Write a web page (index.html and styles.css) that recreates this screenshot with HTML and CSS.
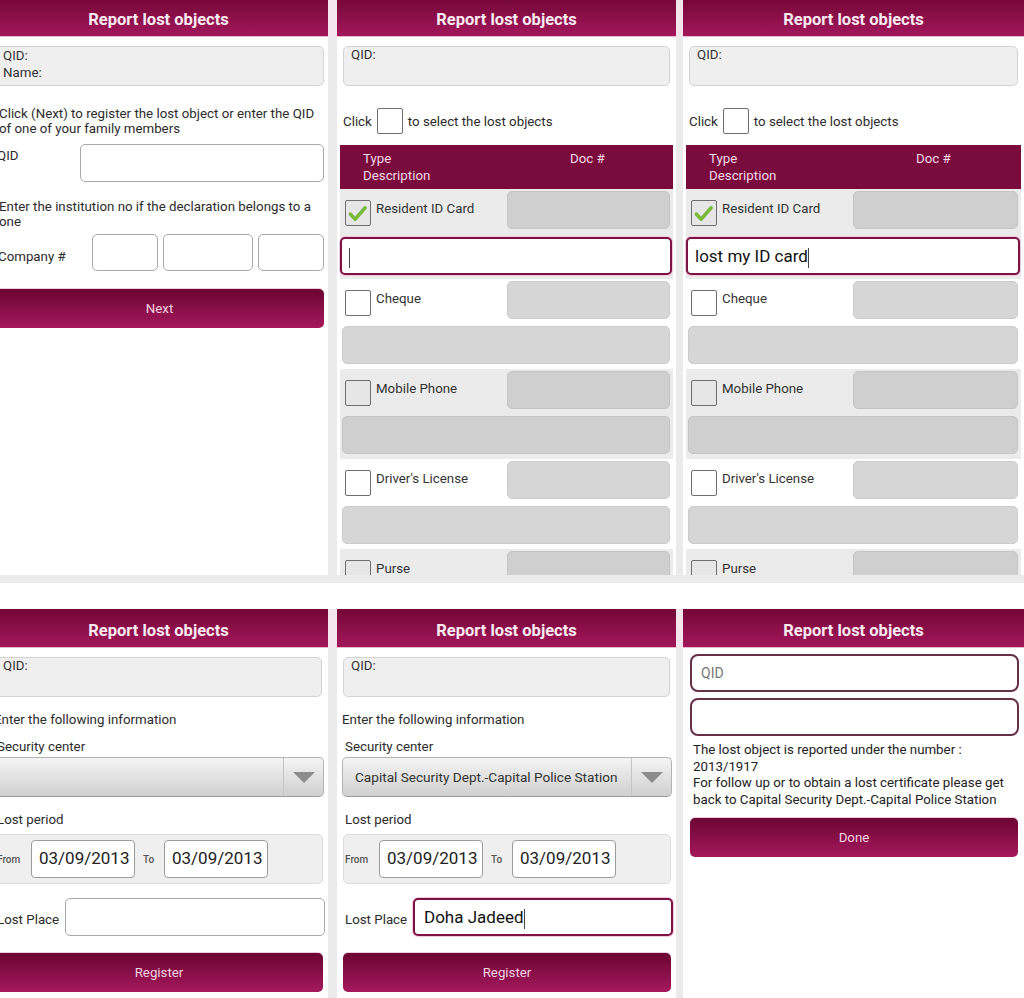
FILE: index.html
```html
<!DOCTYPE html>
<html>
<head>
    <title>Report lost objects</title>
    <link rel="stylesheet" href="styles.css">
</head>
<body>
    <div class="row row-top">
        <!-- step 1: QID / company -->
        <div class="clip">
            <div class="screen">
                <div class="title">Report lost objects</div>
                <div class="info two-line">QID:<br>Name:</div>
                <p class="note">Click (Next) to register the lost object or enter the QID of one of your family members</p>
                <div class="qid-row">
                    <span class="field-label">QID</span>
                    <div class="input"></div>
                </div>
                <p class="note note-2">Enter the institution no if the declaration belongs to a one</p>
                <div class="company-row">
                    <span class="company-label">Company #</span>
                    <div class="input small"></div>
                    <div class="input mid"></div>
                    <div class="input small"></div>
                </div>
                <div class="btn btn-next">Next</div>
            </div>
        </div>

        <!-- step 2: select objects -->
        <div class="screen">
            <div class="title">Report lost objects</div>
            <div class="info">QID:</div>
            <div class="pick">Click <span class="box"></span> to select the lost objects</div>
            <div class="table-head">
                <div class="col-type">Type<br>Description</div>
                <div>Doc #</div>
            </div>
            <div class="obj-row shaded">
                <div class="obj-top">
                    <div class="obj-check">
                        <span class="box"><svg viewBox="0 0 24 24" width="23" height="23"><path d="M4.5 12.5 L9.5 18 L20 6" fill="none" stroke="#78bb3c" stroke-width="3.6" stroke-linecap="round" stroke-linejoin="round"/></svg></span>
                        <span class="obj-name">Resident ID Card</span>
                    </div>
                    <div class="doc"></div>
                </div>
                <div class="desc focus"><span class="caret"></span></div>
            </div>
            <div class="obj-row">
                <div class="obj-top">
                    <div class="obj-check"><span class="box"></span><span class="obj-name">Cheque</span></div>
                    <div class="doc"></div>
                </div>
                <div class="desc"></div>
            </div>
            <div class="obj-row shaded">
                <div class="obj-top">
                    <div class="obj-check"><span class="box"></span><span class="obj-name">Mobile Phone</span></div>
                    <div class="doc"></div>
                </div>
                <div class="desc"></div>
            </div>
            <div class="obj-row">
                <div class="obj-top">
                    <div class="obj-check"><span class="box"></span><span class="obj-name">Driver's License</span></div>
                    <div class="doc"></div>
                </div>
                <div class="desc"></div>
            </div>
            <div class="obj-row shaded">
                <div class="obj-top">
                    <div class="obj-check"><span class="box"></span><span class="obj-name">Purse</span></div>
                    <div class="doc"></div>
                </div>
                <div class="desc"></div>
            </div>
        </div>

        <!-- step 2 with description typed -->
        <div class="screen">
            <div class="title">Report lost objects</div>
            <div class="info">QID:</div>
            <div class="pick">Click <span class="box"></span> to select the lost objects</div>
            <div class="table-head">
                <div class="col-type">Type<br>Description</div>
                <div>Doc #</div>
            </div>
            <div class="obj-row shaded">
                <div class="obj-top">
                    <div class="obj-check">
                        <span class="box"><svg viewBox="0 0 24 24" width="23" height="23"><path d="M4.5 12.5 L9.5 18 L20 6" fill="none" stroke="#78bb3c" stroke-width="3.6" stroke-linecap="round" stroke-linejoin="round"/></svg></span>
                        <span class="obj-name">Resident ID Card</span>
                    </div>
                    <div class="doc"></div>
                </div>
                <div class="desc focus">lost my ID card<span class="caret"></span></div>
            </div>
            <div class="obj-row">
                <div class="obj-top">
                    <div class="obj-check"><span class="box"></span><span class="obj-name">Cheque</span></div>
                    <div class="doc"></div>
                </div>
                <div class="desc"></div>
            </div>
            <div class="obj-row shaded">
                <div class="obj-top">
                    <div class="obj-check"><span class="box"></span><span class="obj-name">Mobile Phone</span></div>
                    <div class="doc"></div>
                </div>
                <div class="desc"></div>
            </div>
            <div class="obj-row">
                <div class="obj-top">
                    <div class="obj-check"><span class="box"></span><span class="obj-name">Driver's License</span></div>
                    <div class="doc"></div>
                </div>
                <div class="desc"></div>
            </div>
            <div class="obj-row shaded">
                <div class="obj-top">
                    <div class="obj-check"><span class="box"></span><span class="obj-name">Purse</span></div>
                    <div class="doc"></div>
                </div>
                <div class="desc"></div>
            </div>
        </div>
    </div>

    <div class="row row-bottom">
        <!-- step 3: empty -->
        <div class="clip">
            <div class="screen">
                <div class="title">Report lost objects</div>
                <div class="info">QID:</div>
                <div class="lead">Enter the following information</div>
                <div class="label label-first">Security center</div>
                <div class="select">
                    <span class="select-text"></span>
                    <span class="select-arrow"><svg viewBox="0 0 22 11" width="22" height="11"><path d="M0 0 H22 L11 11 Z" fill="#8d8d8d"/></svg></span>
                </div>
                <div class="label">Lost period</div>
                <div class="dates">
                    <span class="from">From</span>
                    <div class="date">03/09/2013</div>
                    <span class="to">To</span>
                    <div class="date">03/09/2013</div>
                </div>
                <div class="place">
                    <span class="place-label">Lost Place</span>
                    <div class="input place-input"></div>
                </div>
                <div class="btn btn-register">Register</div>
            </div>
        </div>

        <!-- step 3: filled -->
        <div class="screen">
            <div class="title">Report lost objects</div>
            <div class="info">QID:</div>
            <div class="lead">Enter the following information</div>
            <div class="label label-first">Security center</div>
            <div class="select">
                <span class="select-text">Capital Security Dept.-Capital Police Station</span>
                <span class="select-arrow"><svg viewBox="0 0 22 11" width="22" height="11"><path d="M0 0 H22 L11 11 Z" fill="#8d8d8d"/></svg></span>
            </div>
            <div class="label">Lost period</div>
            <div class="dates">
                <span class="from">From</span>
                <div class="date">03/09/2013</div>
                <span class="to">To</span>
                <div class="date">03/09/2013</div>
            </div>
            <div class="place">
                <span class="place-label">Lost Place</span>
                <div class="input place-input focus">Doha Jadeed<span class="caret"></span></div>
            </div>
            <div class="btn btn-register">Register</div>
        </div>

        <!-- step 4: done -->
        <div class="screen">
            <div class="title">Report lost objects</div>
            <div class="framed">QID</div>
            <div class="framed"></div>
            <p class="result">The lost object is reported under the number :<br>2013/1917<br>For follow up or to obtain a lost certificate please get back to Capital Security Dept.-Capital Police Station</p>
            <div class="btn btn-done">Done</div>
        </div>
    </div>
</body>
</html>
```

FILE: styles.css
```css
body {
    margin: 0;
    background-color: #fff;
    font-family: Roboto, "Noto Sans", sans-serif;
    font-size: 13.3px;
    color: #2b2b2b;
    width: 1024px;
    height: 998px;
    overflow: hidden;
}

p {
    margin: 0;
}

.row {
    display: grid;
    grid-template-columns: 330px 339px 341px;
    column-gap: 7px;
    background: linear-gradient(#f4e5ec 0, #f4e5ec 39px, #ebebeb 39px);
}

.row-top {
    height: 577px;
    margin-top: -2px;
    border-bottom: 8px solid #ebebeb;
}

.row-bottom {
    height: 389px;
    margin-top: 26px;
}

.clip {
    overflow: hidden;
}

.screen {
    background-color: #fff;
    height: 100%;
    overflow: hidden;
    display: flex;
    flex-direction: column;
}

.clip .screen {
    width: 339px;
    margin-left: -11px;
}

.title {
    flex-shrink: 0;
    height: 39px;
    box-sizing: border-box;
    padding-top: 3px;
    border-bottom: 1px solid #e9b6ce;
    background: linear-gradient(#740736, #a2175b);
    color: #fbeaf2;
    font-weight: bold;
    font-size: 16.5px;
    line-height: 38px;
    text-align: center;
}

.info {
    flex-shrink: 0;
    margin: 9px 6px 0;
    height: 40px;
    box-sizing: border-box;
    background-color: #efefef;
    border: 1px solid #d3d3d3;
    border-radius: 5px;
    padding: 0 7px;
    line-height: 16px;
    color: #333;
}

.info.two-line {
    margin: 9px 4px 0 6px;
    line-height: 17px;
}

/* step 1 */
.note {
    margin-top: 20px;
    padding: 0 6px 0 10px;
    line-height: 15px;
}

.note-2 {
    margin-top: 17px;
}

.qid-row {
    display: flex;
    margin-top: 8px;
    margin-right: 4px;
}

.field-label {
    width: 91px;
    padding: 4px 0 0 8px;
    box-sizing: border-box;
    line-height: 16px;
}

.input {
    flex: 1;
    height: 38px;
    box-sizing: border-box;
    background-color: #fff;
    border: 1.5px solid #a9a9a9;
    border-radius: 5px;
}

.company-row {
    display: flex;
    align-items: center;
    gap: 5px;
    margin: 5px 4px 0 0;
    padding-left: 9px;
}

.company-label {
    width: 89px;
    padding-top: 9px;
    line-height: 16px;
}

.input.small {
    flex: 0 0 66px;
    height: 37px;
}

.input.mid {
    flex: 0 0 90px;
    height: 37px;
}

.btn {
    flex-shrink: 0;
    height: 39px;
    border-radius: 5px;
    background: linear-gradient(#6b0633, #a5185c);
    box-shadow: 0 -1px 0 #f3cadd;
    color: #f4d0e0;
    line-height: 39px;
    text-align: center;
}

.btn-next {
    margin: 18px 4px 0 6px;
}

/* step 2 */
.pick {
    display: flex;
    align-items: center;
    gap: 5px;
    margin-top: 22px;
    padding-left: 6px;
    height: 26px;
}

.box {
    width: 26px;
    height: 26px;
    box-sizing: border-box;
    border: 1.5px solid #6f6f6f;
    border-radius: 2px;
    background-color: #fff;
    flex-shrink: 0;
    display: flex;
    align-items: flex-end;
}

.table-head {
    flex-shrink: 0;
    display: flex;
    margin: 11px 3px 0;
    height: 44px;
    box-sizing: border-box;
    padding: 5px 0 0 23px;
    background-color: #7a0b3d;
    color: #f3d8e5;
    line-height: 17px;
}

.col-type {
    width: 207px;
}

.obj-row {
    flex-shrink: 0;
    height: 90px;
    box-sizing: border-box;
    padding-top: 2px;
    margin: 0 3px;
    background-color: #fff;
}

.obj-row.shaded {
    background-color: #ebebeb;
}

.obj-top {
    display: flex;
    height: 38px;
}

.obj-check {
    width: 162px;
    display: flex;
    align-items: flex-start;
    padding: 9px 0 0 5px;
}

.obj-name {
    margin-left: 5px;
    padding-top: 1px;
    line-height: 16px;
    color: #333;
}

.shaded .box {
    background-color: #e6e6e6;
}

.doc {
    flex: 1;
    margin-right: 3px;
    height: 38px;
    box-sizing: border-box;
    background-color: #d6d6d6;
    border: 1px solid #cbcbcb;
    border-radius: 5px;
}

.desc {
    margin: 7px 3px 0 2px;
    height: 38px;
    box-sizing: border-box;
    background-color: #d6d6d6;
    border: 1px solid #cbcbcb;
    border-radius: 5px;
}

.shaded .doc,
.shaded .desc {
    background-color: #cfcfcf;
    border-color: #c5c5c5;
}

.shaded .desc.focus,
.desc.focus {
    margin: 8px 1px 0 0;
    background-color: #fff;
    border: 2px solid #7b1444;
    box-shadow: 0 0 0 1px #f2c8db;
    padding-left: 7px;
    font-size: 17px;
    line-height: 34px;
    color: #111;
}

.caret {
    display: inline-block;
    width: 0;
    height: 20px;
    border-left: 1px solid #444;
    vertical-align: middle;
}

/* step 3 */
.lead {
    margin-top: 15px;
    padding-left: 5px;
    line-height: 16px;
}

.label {
    margin-top: 15px;
    padding-left: 8px;
    line-height: 16px;
}

.label.label-first {
    margin-top: 11px;
}

.select {
    flex-shrink: 0;
    display: flex;
    align-items: center;
    margin: 2px 4px 0 5px;
    height: 40px;
    box-sizing: border-box;
    border: 1px solid #b4b4b4;
    border-bottom-color: #9d9d9d;
    border-radius: 5px;
    background: linear-gradient(#f4f4f4, #d0d0d0);
    color: #333;
    font-size: 13.6px;
}

.select-text {
    flex: 1;
    padding-left: 12px;
}

.select-arrow {
    width: 39px;
    height: 100%;
    border-left: 1px solid #c4c4c4;
    display: flex;
    align-items: center;
    justify-content: center;
}

.dates {
    flex-shrink: 0;
    display: flex;
    align-items: center;
    margin: 6px 5px 0 6px;
    height: 50px;
    box-sizing: border-box;
    padding-left: 1px;
    background-color: #efefef;
    border: 1px solid #dcdcdc;
    border-radius: 5px;
}

.from,
.to {
    font-size: 10px;
    color: #555;
    font-weight: 500;
}

.from {
    width: 34px;
}

.to {
    width: 21px;
    padding-left: 8px;
}

.date {
    width: 104px;
    height: 38px;
    box-sizing: border-box;
    background-color: #fff;
    border: 1.5px solid #9c9c9c;
    border-radius: 4px;
    padding-left: 7px;
    font-size: 17px;
    line-height: 35px;
    color: #222;
}

.place {
    display: flex;
    align-items: center;
    margin: 14px 3px 0 0;
}

.place-label {
    width: 76px;
    box-sizing: border-box;
    padding: 5px 0 0 8px;
    line-height: 16px;
}

.place-input.focus {
    border: 2px solid #7b1444;
    box-shadow: 0 0 0 1px #f2c8db;
    padding-left: 9px;
    font-size: 17px;
    line-height: 34px;
    color: #111;
}

.btn-register {
    margin: 17px 5px 0 6px;
}

/* step 4 */
.framed {
    flex-shrink: 0;
    margin: 6px 5px 0 7px;
    height: 38px;
    box-sizing: border-box;
    background-color: #fff;
    border: 2px solid #653049;
    border-radius: 8px;
    padding-left: 9px;
    font-size: 14px;
    line-height: 34px;
    color: #777;
}

.result {
    margin-top: 6px;
    padding: 0 8px 0 10px;
    line-height: 16.7px;
    color: #222;
}

.btn-done {
    margin: 9px 6px 0 7px;
}
```
